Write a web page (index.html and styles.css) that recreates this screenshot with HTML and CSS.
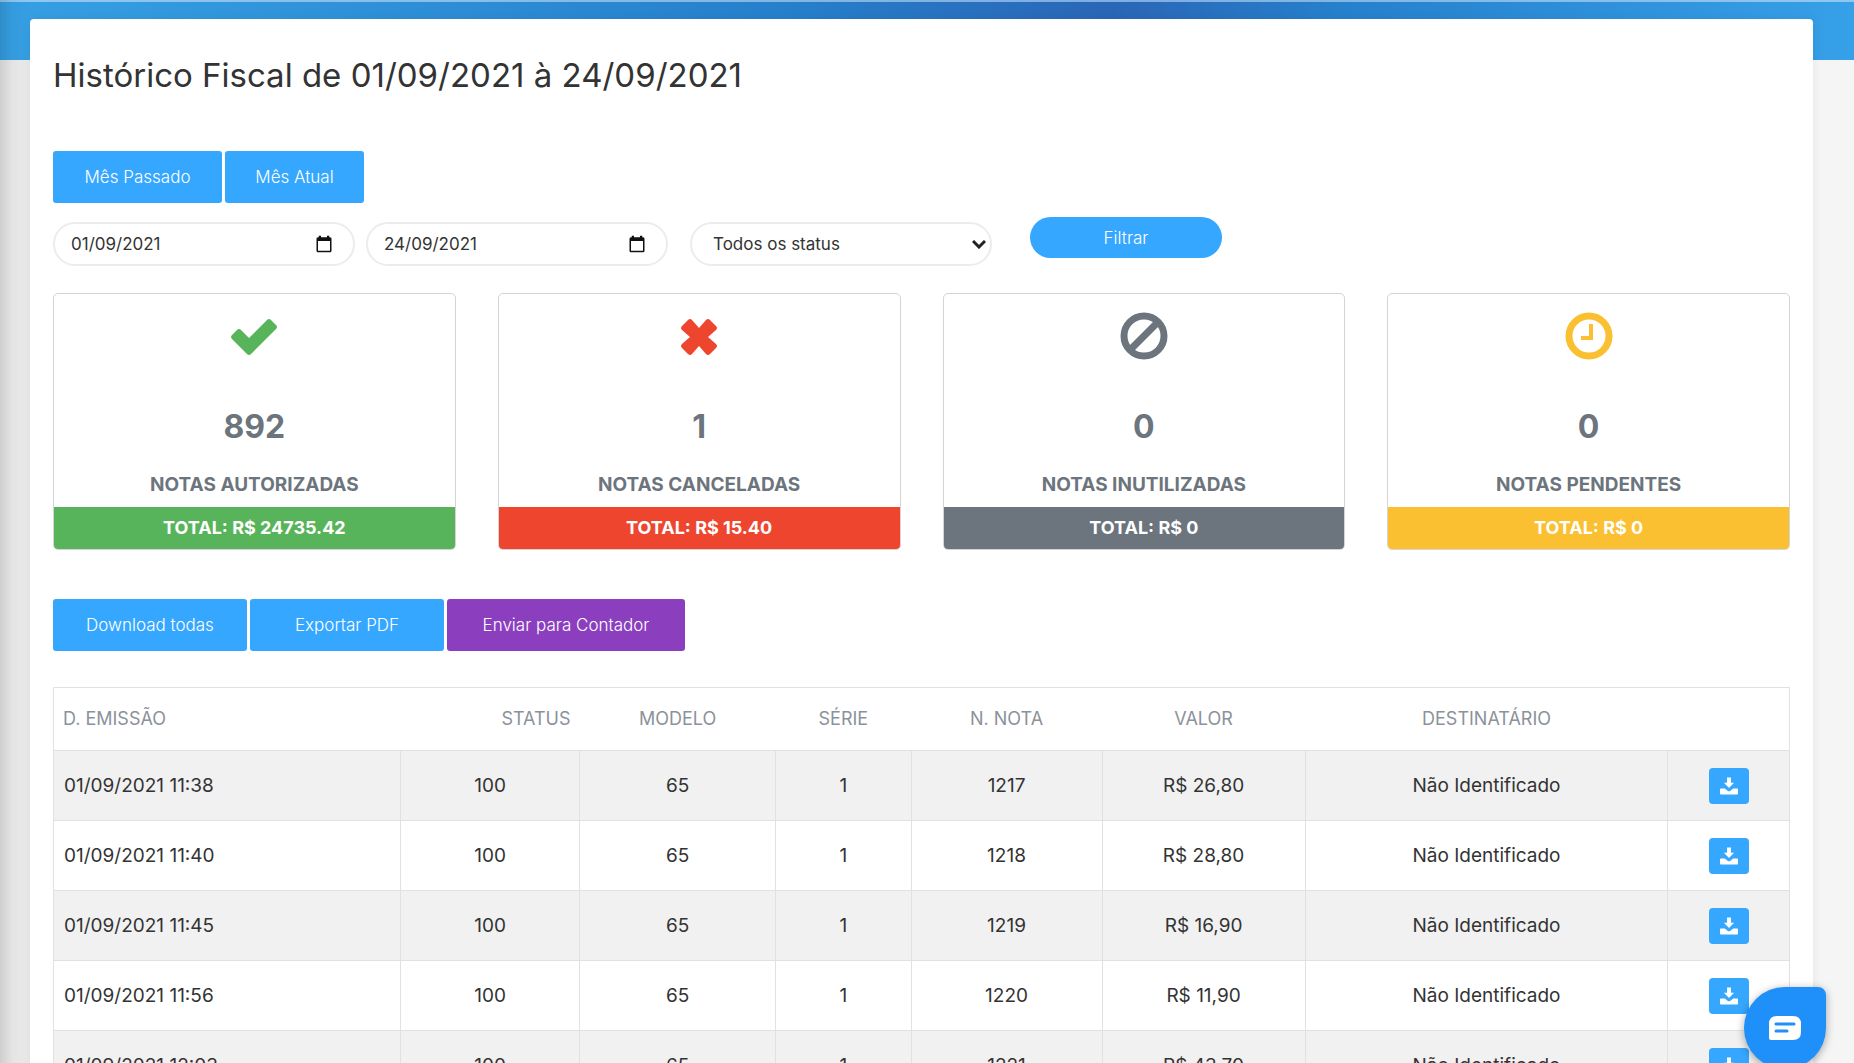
FILE: index.html
```html
<!DOCTYPE html>
<html lang="pt-BR">
<head>
<meta charset="utf-8">
<meta name="viewport" content="width=device-width, initial-scale=1">
<title>Histórico Fiscal</title>
<link rel="stylesheet" href="styles.css">
</head>
<body>
<svg class="sprite" aria-hidden="true">
  <symbol id="calendar" viewBox="0 0 24 24"><path d="M20 3h-1V1h-3v2H8V1H5v2H4a2 2 0 0 0-2 2v16a2 2 0 0 0 2 2h16a2 2 0 0 0 2-2V5a2 2 0 0 0-2-2zm0 18H4V8h16z"/></symbol>
  <symbol id="download" viewBox="0 0 512 512"><path d="M200 16h112v144h88L256 312 112 160h88z"/><path d="M24 330h112l88 66q32 24 64 0l88-66h112q24 0 24 24v118q0 24-24 24H24q-24 0-24-24V354q0-24 24-24z"/></symbol>
</svg>
<main class="panel">
  <h1 class="title">Histórico Fiscal de 01/09/2021 à 24/09/2021</h1>
  <div class="button-row">
    <button class="button button-medium" type="button">Mês Passado</button>
    <button class="button button-small" type="button">Mês Atual</button>
  </div>
  <form class="filters">
    <div class="date-field">
      <input class="date-input" type="text" value="01/09/2021" aria-label="Data inicial">
      <svg class="date-icon" aria-hidden="true"><use href="#calendar"/></svg>
    </div>
    <div class="date-field">
      <input class="date-input" type="text" value="24/09/2021" aria-label="Data final">
      <svg class="date-icon" aria-hidden="true"><use href="#calendar"/></svg>
    </div>
    <div class="status-field">
      <select class="status-select" aria-label="Status"><option>Todos os status</option></select>
      <svg class="chevron" viewBox="0 0 14 9" aria-hidden="true"><path d="M1 1l6 6 6-6"/></svg>
    </div>
    <button class="filter-button" type="button">Filtrar</button>
  </form>
  <section class="cards">
    <article class="card card-green">
      <svg class="card-icon" viewBox="0 0 48 48" aria-hidden="true"><path d="M2 23l5-5q2-2 4 0l8 8L37 8q2-2 4 0l5 5q2 2 0 4L21 42q-2 2-4 0L2 27q-2-2 0-4z" fill="currentColor"/></svg>
      <strong class="card-count">892</strong>
      <span class="card-label">NOTAS AUTORIZADAS</span>
      <div class="card-total">TOTAL: R$ 24735.42</div>
    </article>
    <article class="card card-red">
      <svg class="card-icon" viewBox="0 0 48 48" aria-hidden="true"><path d="M13 8q2-2 4 0l7 8 7-8q2-2 4 0l6 6q2 2 0 4l-8 7 8 7q2 2 0 4l-6 6q-2 2-4 0l-7-8-7 8q-2 2-4 0l-6-6q-2-2 0-4l8-7-8-7q-2-2 0-4z" fill="currentColor"/></svg>
      <strong class="card-count">1</strong>
      <span class="card-label">NOTAS CANCELADAS</span>
      <div class="card-total">TOTAL: R$ 15.40</div>
    </article>
    <article class="card card-grey">
      <svg class="card-icon" viewBox="0 0 48 48" aria-hidden="true"><g fill="none" stroke="currentColor" stroke-width="7"><circle cx="24" cy="24" r="20"/><path d="M38 10L10 38"/></g></svg>
      <strong class="card-count">0</strong>
      <span class="card-label">NOTAS INUTILIZADAS</span>
      <div class="card-total">TOTAL: R$ 0</div>
    </article>
    <article class="card card-yellow">
      <svg class="card-icon" viewBox="0 0 48 48" aria-hidden="true"><g fill="none" stroke="currentColor"><circle cx="24" cy="24" r="20" stroke-width="7"/><path d="M26 12v14H16" stroke-width="4"/></g></svg>
      <strong class="card-count">0</strong>
      <span class="card-label">NOTAS PENDENTES</span>
      <div class="card-total">TOTAL: R$ 0</div>
    </article>
  </section>
  <div class="button-row">
    <button class="button button-large" type="button">Download todas</button>
    <button class="button button-large" type="button">Exportar PDF</button>
    <button class="button button-purple" type="button">Enviar para Contador</button>
  </div>
  <table class="notes">
    <colgroup><col class="col-date"><col class="col-status"><col class="col-model"><col class="col-series"><col class="col-number"><col class="col-value"><col class="col-recipient"><col class="col-action"></colgroup>
    <thead>
      <tr><th class="date-cell">D. EMISSÃO</th><th class="status-head">STATUS</th><th>MODELO</th><th>SÉRIE</th><th>N. NOTA</th><th>VALOR</th><th>DESTINATÁRIO</th><th></th></tr>
    </thead>
    <tbody>
      <tr><td class="date-cell">01/09/2021 11:38</td><td>100</td><td>65</td><td>1</td><td>1217</td><td>R$ 26,80</td><td>Não Identificado</td><td><button class="download" type="button" aria-label="Baixar nota 1217"><svg class="download-icon"><use href="#download"/></svg></button></td></tr>
      <tr><td class="date-cell">01/09/2021 11:40</td><td>100</td><td>65</td><td>1</td><td>1218</td><td>R$ 28,80</td><td>Não Identificado</td><td><button class="download" type="button" aria-label="Baixar nota 1218"><svg class="download-icon"><use href="#download"/></svg></button></td></tr>
      <tr><td class="date-cell">01/09/2021 11:45</td><td>100</td><td>65</td><td>1</td><td>1219</td><td>R$ 16,90</td><td>Não Identificado</td><td><button class="download" type="button" aria-label="Baixar nota 1219"><svg class="download-icon"><use href="#download"/></svg></button></td></tr>
      <tr><td class="date-cell">01/09/2021 11:56</td><td>100</td><td>65</td><td>1</td><td>1220</td><td>R$ 11,90</td><td>Não Identificado</td><td><button class="download" type="button" aria-label="Baixar nota 1220"><svg class="download-icon"><use href="#download"/></svg></button></td></tr>
      <tr><td class="date-cell">01/09/2021 12:03</td><td>100</td><td>65</td><td>1</td><td>1221</td><td>R$ 43,70</td><td>Não Identificado</td><td><button class="download" type="button" aria-label="Baixar nota 1221"><svg class="download-icon"><use href="#download"/></svg></button></td></tr>
    </tbody>
  </table>
</main>
<button class="chat" type="button" aria-label="Abrir chat">
  <svg class="chat-icon" viewBox="0 0 32 24" aria-hidden="true"><path d="M8 0h16q8 0 8 8v8q0 8-8 8H2q-2 0-2-2V8q0-8 8-8z" fill="#fff"/><path d="M7 8h18M7 15h11" stroke="#1f8ffa" stroke-width="3" stroke-linecap="round"/></svg>
</button>
</body>
</html>
```
FILE: styles.css
```css
* { box-sizing: border-box; }

body {
  margin: 0;
  height: 100vh;
  overflow: hidden;
  padding: 19px 41px 0 30px;
  color: #333;
  font: 18px/28px Inter, sans-serif;
  background:
    linear-gradient(90deg, rgba(0, 0, 0, .12), rgba(0, 0, 0, .03) 12px, transparent 30px) no-repeat,
    linear-gradient(90deg, #8ec8f0, #7eaee0 60%, #8ec8f0) 0 0 / 100% 2px no-repeat,
    linear-gradient(90deg, #36a0e4, #2680cc 42%, #2a66b6 60%, #2680cc 72%, #36a0e8) 0 0 / 100% 60px no-repeat,
    linear-gradient(90deg, #ebebeb 50%, #f5f5f5 50%);
}

button, input, select { font: inherit; }
button { border: 0; cursor: pointer; }
.sprite { display: none; }

.panel {
  padding: 35px 23px 0;
  border-radius: 4px 4px 0 0;
  background: #fff;
  box-shadow: 0 0 12px rgba(0, 0, 0, .06);
}

.title {
  margin: 0 0 54px;
  font-size: 33px;
  line-height: 43px;
  font-weight: 400;
}

.button-row { display: flex; gap: 3px; }

.button {
  min-width: 139px;
  height: 52px;
  padding: 0 16px;
  border-radius: 3px;
  background: #35a7ff;
  color: #fff;
  font-size: 17px;
  font-weight: 300;
}
.button-medium { min-width: 169px; }
.button-large { min-width: 194px; }
.button-purple { min-width: 238px; background: #8b3fbf; }

.filters {
  display: flex;
  align-items: center;
  margin: 19px 0 27px;
}

.date-field, .status-field {
  display: flex;
  align-items: center;
  flex: 0 1 302px;
  min-width: 0;
  height: 44px;
  border: 2px solid #ececec;
  border-radius: 22px;
}
.date-field { margin-right: 11px; padding: 0 20px 0 16px; }
.date-input {
  flex: 1;
  min-width: 0;
  padding: 0;
  border: 0;
  background: none;
  color: #333;
  font-size: 17px;
}
.date-icon { flex: none; width: 18px; height: 18px; fill: #111; }

.status-field { margin: 0 38px 0 11px; padding-right: 4px; }
.status-select {
  flex: 1;
  min-width: 0;
  padding: 0 21px;
  border: 0;
  background: none;
  appearance: none;
  color: #333;
  font-size: 17px;
}
.chevron { flex: none; width: 14px; height: 9px; fill: none; stroke: #222; stroke-width: 3; }

.filter-button {
  flex: 0 1 192px;
  align-self: flex-start;
  height: 41px;
  margin-top: -5px;
  border-radius: 21px;
  background: #35a7ff;
  color: #fff;
  font-size: 17px;
  font-weight: 300;
}

.cards {
  display: grid;
  grid-template-columns: repeat(4, 1fr);
  gap: 42px;
  margin-bottom: 49px;
}
.card {
  display: flex;
  flex-direction: column;
  align-items: center;
  overflow: hidden;
  padding-top: 18px;
  border: 1px solid #d4d4d4;
  border-radius: 5px;
  text-align: center;
}
.card-icon { width: 48px; height: 48px; }
.card-count {
  margin: 47px 0 24px;
  color: #6c757d;
  font-size: 32px;
  line-height: 40px;
}
.card-label { color: #6c757d; font-size: 19px; font-weight: 700; }
.card-total {
  align-self: stretch;
  margin-top: 8px;
  padding: 7px;
  color: #fff;
  font-weight: 700;
}
.card-green { color: #58b45a; }
.card-red { color: #ee452f; }
.card-grey { color: #6c757d; }
.card-yellow { color: #fac031; }
.card-green .card-total { background: #58b45a; }
.card-red .card-total { background: #ee452f; }
.card-grey .card-total { background: #6c757d; }
.card-yellow .card-total { background: #fac031; }

.notes {
  width: 100%;
  margin-top: 36px;
  border: 1px solid #dee2e6;
  border-collapse: collapse;
  table-layout: fixed;
  text-align: center;
}
.col-date { width: 20%; }
.col-status { width: 10.3%; }
.col-model { width: 11.3%; }
.col-series { width: 7.8%; }
.col-number { width: 11%; }
.col-value { width: 11.7%; }
.col-recipient { width: 20.9%; }
.col-action { width: 7%; }
.notes th { height: 63px; padding: 0 9px; color: #8b929a; font-weight: 400; }
.notes td { height: 70px; padding: 0 10px; border: 1px solid #dee2e6; font-size: 19px; }
.notes .date-cell { text-align: left; }
.notes .status-head { text-align: right; }
.notes tbody tr:nth-child(odd) { background: #f1f1f1; }

.download {
  display: inline-flex;
  align-items: center;
  justify-content: center;
  width: 40px;
  height: 36px;
  padding: 0;
  border-radius: 4px;
  background: #35a7ff;
  vertical-align: middle;
}
.download-icon { width: 18px; height: 18px; fill: #fff; }

.chat {
  position: fixed;
  right: 28px;
  bottom: -6px;
  display: flex;
  align-items: center;
  justify-content: center;
  width: 82px;
  height: 82px;
  border-radius: 41px 8px 41px 41px;
  background: #1f8ffa;
  box-shadow: 0 2px 8px rgba(0, 0, 0, .35);
}
.chat-icon { width: 32px; height: 24px; fill: none; }
```
